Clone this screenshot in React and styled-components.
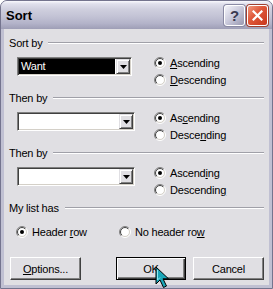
import React from 'react';
import styled, { createGlobalStyle } from 'styled-components';

const Global = createGlobalStyle`
  html, body { margin: 0; padding: 0; background: #ffffff; }
  body { font-family: "Liberation Sans", Arial, sans-serif; font-size: 11px; letter-spacing: -0.2px; color: #000; }
  * { box-sizing: border-box; }
`;

const Window = styled.div`
  position: relative;
  width: 273px;
  height: 289px;
  display: flex;
  flex-direction: column;
  background: #c0c0d2;
  border: 1px solid #74748e;
  border-radius: 7px 7px 0 0;
  overflow: hidden;
`;

const TitleBar = styled.div`
  height: 28px;
  flex: none;
  display: flex;
  align-items: center;
  padding: 0 4px 0 5px;
  background: linear-gradient(to bottom, #fafafe 0%, #e0e0ec 10%, #cfcfde 30%, #c3c3d5 55%, #b3b3c9 80%, #9e9eb6 100%);
`;

const Title = styled.div`
  flex: 1;
  font-family: "Liberation Sans", Arial, sans-serif;
  font-weight: bold;
  font-size: 13px;
  letter-spacing: 0;
  color: #000;
  padding-top: 1px;
`;

const CaptionButton = styled.div`
  width: 21px;
  height: 21px;
  margin-left: 2px;
  border: 1px solid #ffffff;
  border-radius: 3px;
  display: flex;
  align-items: center;
  justify-content: center;
  background: ${p => p.$close
    ? 'linear-gradient(135deg, #f09a80 0%, #e05a3c 40%, #c8361c 100%)'
    : 'linear-gradient(135deg, #f4f4fa 0%, #c8c8da 50%, #9898b0 100%)'};
  box-shadow: 0 0 0 1px ${p => p.$close ? '#a04030' : '#8a8aa4'};
  color: #3a3a50;
  font-weight: bold;
  font-size: 15px;
  letter-spacing: 0;
  font-family: "Liberation Sans", Arial, sans-serif;
`;

const Frame = styled.div`
  flex: 1;
  display: flex;
  padding: 0 3px 3px 3px;
`;

const Body = styled.div`
  flex: 1;
  background: #e0dfe3;
  padding: 7px 5px 0 5px;
  display: flex;
  flex-direction: column;
`;

const GroupHeader = styled.div`
  height: 14px;
  display: flex;
  align-items: center;
  white-space: nowrap;
`;

const HeaderLine = styled.div`
  flex: 1;
  height: 2px;
  margin-left: 6px;
  border-top: 1px solid #a0a0a8;
  border-bottom: 1px solid #ffffff;
`;

const SortRow = styled.div`
  margin-top: 4px;
  height: 37px;
  display: grid;
  grid-template-columns: 145px 1fr;
  align-items: start;
`;

const ComboCell = styled.div`
  padding-left: 8px;
  padding-top: 3px;
`;

const Combo = styled.div`
  width: ${p => p.$w}px;
  height: 19px;
  display: flex;
  border: 1px solid;
  border-color: #808080 #ffffff #ffffff #808080;
  box-shadow: inset 1px 1px 0 #404040, inset -1px -1px 0 #d4d0c8;
  background: #ffffff;
  padding: 1px;
`;

const ComboText = styled.div`
  flex: 1;
  background: ${p => p.$selected ? '#000000' : '#ffffff'};
  color: ${p => p.$selected ? '#ffffff' : '#000000'};
  padding-left: 2px;
  line-height: 15px;
  margin-right: 1px;
`;

const DropButton = styled.div`
  width: 14px;
  display: flex;
  align-items: center;
  justify-content: center;
  background: #e0dfe3;
  border: 1px solid;
  border-color: #e0dfe3 #404040 #404040 #e0dfe3;
  box-shadow: inset 1px 1px 0 #ffffff, inset -1px -1px 0 #808080;
`;

const RadioCol = styled.div`
  display: flex;
  flex-direction: column;
`;

const RadioItem = styled.div`
  height: 17px;
  display: flex;
  align-items: center;
  gap: 4px;
  white-space: nowrap;
`;

const ListRow = styled.div`
  margin-top: 8px;
  display: grid;
  grid-template-columns: 103px auto;
  padding-left: 7px;
`;

const ButtonRow = styled.div`
  margin-top: 17px;
  display: flex;
  padding-left: 1px;
`;

const Button = styled.div`
  width: ${p => p.$w}px;
  height: 23px;
  margin-left: ${p => p.$ml || 0}px;
  display: flex;
  align-items: center;
  justify-content: center;
  background: #e0dfe3;
  border: 1px solid;
  border-color: ${p => p.$default ? '#000000' : '#ffffff #404040 #404040 #ffffff'};
  box-shadow: ${p => p.$default
    ? 'inset 1px 1px 0 #ffffff, inset -1px -1px 0 #404040, inset -2px -2px 0 #808080'
    : 'inset -1px -1px 0 #808080'};
`;

const Cursor = styled.svg`
  position: absolute;
  left: 154px;
  top: 265px;
`;

const Arrow = () => (
  <svg width="7" height="4" viewBox="0 0 7 4">
    <path d="M0 0 H7 L3.5 4 Z" fill="#000" />
  </svg>
);

const Radio = ({ checked }) => (
  <svg width="12" height="12" viewBox="0 0 12 12">
    <defs>
      <linearGradient id="ro" x1="0" y1="0" x2="1" y2="1">
        <stop offset="0.45" stopColor="#808080" />
        <stop offset="0.55" stopColor="#ffffff" />
      </linearGradient>
      <linearGradient id="ri" x1="0" y1="0" x2="1" y2="1">
        <stop offset="0.45" stopColor="#404040" />
        <stop offset="0.55" stopColor="#d4d0c8" />
      </linearGradient>
    </defs>
    <circle cx="6" cy="6" r="5.5" fill="none" stroke="url(#ro)" />
    <circle cx="6" cy="6" r="4.5" fill="#ffffff" stroke="url(#ri)" />
    {checked && <circle cx="6" cy="6" r="2" fill="#000" />}
  </svg>
);

const RadioLabel = ({ checked, children }) => (
  <RadioItem>
    <Radio checked={checked} />
    <span>{children}</span>
  </RadioItem>
);

const groups = [
  { title: 'Sort by', w: 115, value: 'Want', asc: <><u>A</u>scending</>, desc: <><u>D</u>escending</> },
  { title: 'Then by', w: 118, value: '', asc: <>As<u>c</u>ending</>, desc: <>Desce<u>n</u>ding</> },
  { title: 'Then by', w: 118, value: '', asc: <>Ascend<u>i</u>ng</>, desc: <>Descendin<u>g</u></> },
];

export default function App() {
  return (
    <>
      <Global />
      <Window>
        <TitleBar>
          <Title>Sort</Title>
          <CaptionButton>?</CaptionButton>
          <CaptionButton $close>
            <svg width="11" height="11" viewBox="0 0 11 11">
              <path d="M1.5 1.5 L9.5 9.5 M9.5 1.5 L1.5 9.5" stroke="#fff" strokeWidth="2.2" strokeLinecap="square" />
            </svg>
          </CaptionButton>
        </TitleBar>
        <Frame>
          <Body>
            {groups.map((g, i) => (
              <React.Fragment key={i}>
                <GroupHeader>
                  {g.title}
                  <HeaderLine />
                </GroupHeader>
                <SortRow>
                  <ComboCell>
                    <Combo $w={g.w}>
                      <ComboText $selected={!!g.value}>{g.value}</ComboText>
                      <DropButton><Arrow /></DropButton>
                    </Combo>
                  </ComboCell>
                  <RadioCol>
                    <RadioLabel checked>{g.asc}</RadioLabel>
                    <RadioLabel>{g.desc}</RadioLabel>
                  </RadioCol>
                </SortRow>
              </React.Fragment>
            ))}
            <GroupHeader>
              My list has
              <HeaderLine />
            </GroupHeader>
            <ListRow>
              <RadioLabel checked>Header <u>r</u>ow</RadioLabel>
              <RadioLabel>No header ro<u>w</u></RadioLabel>
            </ListRow>
            <ButtonRow>
              <Button $w={71}><span><u>O</u>ptions...</span></Button>
              <Button $w={70} $ml={35} $default>OK</Button>
              <Button $w={71} $ml={7}>Cancel</Button>
            </ButtonRow>
          </Body>
        </Frame>
        <Cursor width="16" height="24" viewBox="0 0 16 24">
          <path d="M1 1 L1 18 L5 14 L8.5 21.5 L11.5 20 L8 12.8 L13.5 12.8 Z" fill="#1aa6b8" stroke="#000" strokeWidth="1" strokeLinejoin="miter" />
          <path d="M2.5 4 L2.5 14 L5 11.5" fill="none" stroke="#8ae6f0" strokeWidth="1" />
        </Cursor>
      </Window>
    </>
  );
}
